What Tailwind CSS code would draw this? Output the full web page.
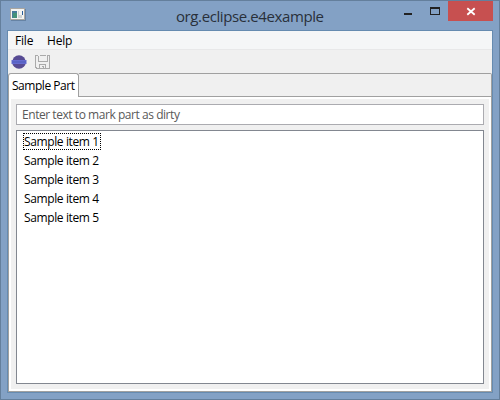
<!DOCTYPE html>
<html lang="en"><head><meta charset="utf-8"><title>org.eclipse.e4example</title>
<script src="https://cdn.jsdelivr.net/npm/@tailwindcss/browser@4"></script></head>
<body class="w-[500px] h-[400px] overflow-hidden font-['Open_Sans','Noto_Sans',sans-serif] text-[12px] leading-[19px] tracking-[-0.38px] text-black">
<div class="w-[500px] h-[400px] flex flex-col border border-[#647f9c] bg-[#83a1c5] px-[6px] pb-[6px]">
  <header class="h-[29px] shrink-0 flex items-start relative">
    <svg class="ml-[3px] mt-[7px]" width="16" height="14" viewBox="0 0 16 14" shape-rendering="crispEdges">
      <path d="M0 0H15V12H0Z" fill="#f4f4f2"/><path d="M.5 .5H14.5V11.5H.5Z" fill="none" stroke="#aaa6a0"/><path d="M1 12H16V13H1ZM15 1H16V13H15Z" fill="#6683a4"/>
      <path d="M2 3H7V10H2Z" fill="#467c9b"/><path d="M3 5H7V10H3Z" fill="#459279"/><path d="M8 3H9V10H8ZM9 7H12V10H9Z" fill="#cfd3d3"/><path d="M12 3H13V7H12Z" fill="#2b5f9a"/>
    </svg>
    <h1 class="absolute left-[169px] top-[5px] text-[15px] leading-[20px] tracking-[-0.4px] text-[#29303a] whitespace-nowrap">org.eclipse.e4example</h1>
    <div class="ml-auto flex">
      <svg width="44" height="20" viewBox="0 0 44 20" shape-rendering="crispEdges"><path d="M0 12h8v2H0Z" fill="#222"/><path d="M26 6h10v8H26ZM27 8v5h8V8Z" fill="#222" fill-rule="evenodd"/></svg>
      <div class="w-[45px] h-[20px] bg-[#c75050]"><svg width="45" height="20" viewBox="0 0 45 20"><path d="M19.3 7.3L26.7 13.7M26.7 7.3L19.3 13.7" stroke="#fff" stroke-width="1.8"/></svg></div>
    </div>
  </header>
  <main class="grow flex flex-col border border-[#668bb0] bg-[#f0f0f0]">
    <nav class="h-[19px] shrink-0 bg-[#f5f6f7] border-b border-[#e8e8e9] flex pl-[7px] gap-[14px] tracking-[-0.2px]"><span class="w-[18px] whitespace-nowrap">File</span><span>Help</span></nav>
    <div class="h-[23px] shrink-0 flex pl-[3px] pt-[4px] gap-[7px]">
      <svg width="16" height="16" viewBox="0 0 16 16"><circle cx="8" cy="8" r="6.8" fill="#574b93"/><path d="M.5 6H15.5V10H.5Z" fill="#656bd0"/><path d="M1 8H15" stroke="#4e5dbb"/></svg>
      <svg width="16" height="16" viewBox="0 0 16 16" fill="#aaa" shape-rendering="crispEdges"><path d="M1 1h3v1H2v11h1v1H1ZM13 1h3v14H2v-1h13V2h-2ZM4 2h1v5h8V2h1v6H4ZM6 1h6v1H6ZM5 10h7v5h-1v-4H6v4H5ZM8 12h2v2H9v-1H8Z"/></svg>
    </div>
    <section class="grow flex flex-col">
      <div class="h-[24px] shrink-0 flex">
        <div class="w-[71px] h-[24px] rounded-t-[3px] border-t border-x border-[#a0a0a0] bg-white pl-[3px] pt-[3px] whitespace-nowrap leading-[18px] tracking-[-0.46px]">Sample Part</div>
        <div class="grow border-t border-r border-b border-[#a0a0a0] rounded-tr-[2px]"></div>
      </div>
      <div class="grow border-x border-b border-[#a0a0a0] bg-white p-[2px] flex">
        <div class="grow bg-[#f0f0f0] p-[5px] flex flex-col gap-[5px]">
          <div class="h-[21px] border border-[#ababb0] bg-white text-[#595959] pl-[5px] whitespace-nowrap tracking-[-0.45px]">Enter text to mark part as dirty</div>
          <ul class="grow border border-[#828790] bg-white pt-[2px] pl-[6px]">
            <li class="w-[78px] h-[17px] mb-px border border-dotted border-black leading-[15px] whitespace-nowrap">Sample item 1</li>
            <li class="h-[19px] pl-px">Sample item 2</li><li class="h-[19px] pl-px">Sample item 3</li><li class="h-[19px] pl-px">Sample item 4</li><li class="h-[19px] pl-px">Sample item 5</li>
          </ul>
        </div>
      </div>
    </section>
  </main>
</div>
</body></html>
